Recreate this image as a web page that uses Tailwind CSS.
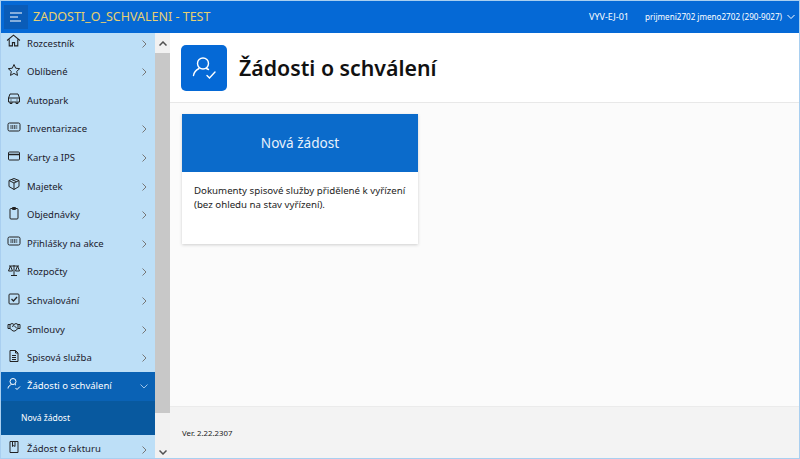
<!DOCTYPE html>
<html lang="cs">
<head>
<meta charset="utf-8">
<script src="https://cdn.jsdelivr.net/npm/@tailwindcss/browser@4"></script>
</head>
<body class="m-0 overflow-hidden">
<div class="w-[800px] h-[459px] overflow-hidden flex flex-col bg-white border border-[#a9cff0] font-['Noto_Sans',sans-serif] text-[#1a1a1a]">
  <header class="h-[32px] shrink-0 bg-[#0569d6] flex items-center">
    <div class="ml-[3px] w-[24px] h-[24px] bg-[#0a5cb8] flex items-center justify-center">
      <svg width="14" height="10" viewBox="0 0 14 10" fill="none" stroke="#fff" stroke-width="1.2"><path d="M1 1h12M1 5h8M1 9h11"/></svg>
    </div>
    <div class="ml-[5px] text-[12.5px] text-[#e8d070] whitespace-nowrap">ZADOSTI_O_SCHVALENI - TEST</div>
    <div class="ml-auto text-[9px] text-white whitespace-nowrap">VYV-EJ-01</div>
    <div class="ml-[16px] text-[8.1px] text-white whitespace-nowrap">prijmeni2702 jmeno2702 (290-9027)</div>
    <svg class="ml-[5px] mr-[4px]" width="8" height="6" viewBox="0 0 8 6" fill="none" stroke="#fff" stroke-width="1"><path d="M.5 1l3.500 3.500L7.500 1"/></svg>
  </header>
  <div class="flex flex-1 min-h-0">
    <nav class="w-[154px] shrink-0 bg-[#bddff7] flex flex-col overflow-hidden text-[9.5px] text-[#20202c]">
      <div class="h-[26px] pb-[2px] shrink-0 flex items-center -mt-[1px]">
        <svg class="ml-[5px] w-[15px] h-[15px] -mt-[8px]" viewBox="0 0 14 14" fill="none" stroke="#222" stroke-width="1"><path d="M1 7l6-5 6 5M3 6v6h3V9h2v3h3V6"/></svg>
        <span class="ml-[6px]">Rozcestník</span>
        <svg class="ml-auto mr-[8px]" width="5" height="8" viewBox="0 0 5 8" fill="none" stroke="#777" stroke-width="1"><path d="M.5.5L4 4 .5 7.500"/></svg>
      </div>
      <div class="h-[28.6px] shrink-0 flex items-center">
        <svg class="ml-[6px] w-[14px] h-[14px] -mt-[5px]" viewBox="0 0 14 14" fill="none" stroke="#222" stroke-width="1"><path d="M7 1.500l1.700 3.700 4 .5-3 2.700.8 4L7 10.400l-3.500 2 .8-4-3-2.700 4-.5z"/></svg>
        <span class="ml-[6px]">Oblíbené</span>
        <svg class="ml-auto mr-[8px]" width="5" height="8" viewBox="0 0 5 8" fill="none" stroke="#777" stroke-width="1"><path d="M.5.5L4 4 .5 7.500"/></svg>
      </div>
      <div class="h-[28.6px] shrink-0 flex items-center">
        <svg class="ml-[6px] w-[14px] h-[14px] -mt-[5px]" viewBox="0 0 14 14" fill="none" stroke="#222" stroke-width="1"><path d="M1.500 7l1.500-4h8l1.500 4v4h-11zM1.500 7h11M3 11v1.500h2V11M9 11v1.500h2V11M3.500 9h1M9.500 9h1"/></svg>
        <span class="ml-[6px]">Autopark</span>
      </div>
      <div class="h-[28.6px] shrink-0 flex items-center">
        <svg class="ml-[6px] w-[14px] h-[14px] -mt-[5px]" viewBox="0 0 14 14" fill="none" stroke="#222" stroke-width="1"><rect x="1" y="3" width="12" height="8" rx="1.500"/><path d="M3.500 6h7M3.500 8h7" stroke-width="1.400" stroke-dasharray="1 .7"/></svg>
        <span class="ml-[6px]">Inventarizace</span>
        <svg class="ml-auto mr-[8px]" width="5" height="8" viewBox="0 0 5 8" fill="none" stroke="#777" stroke-width="1"><path d="M.5.5L4 4 .5 7.500"/></svg>
      </div>
      <div class="h-[28.6px] shrink-0 flex items-center">
        <svg class="ml-[6px] w-[14px] h-[14px] -mt-[5px]" viewBox="0 0 14 14" fill="none" stroke="#222" stroke-width="1"><rect x="1.500" y="3" width="11" height="8" rx="1"/><path d="M1.500 5.500h11" stroke-width="1.500"/></svg>
        <span class="ml-[6px]">Karty a IPS</span>
        <svg class="ml-auto mr-[8px]" width="5" height="8" viewBox="0 0 5 8" fill="none" stroke="#777" stroke-width="1"><path d="M.5.5L4 4 .5 7.500"/></svg>
      </div>
      <div class="h-[28.6px] shrink-0 flex items-center">
        <svg class="ml-[6px] w-[14px] h-[14px] -mt-[5px]" viewBox="0 0 14 14" fill="none" stroke="#222" stroke-width="1"><path d="M7 1.500l5 2v6l-5 3-5-3v-6zM2 3.500l5 2.500 5-2.500M7 6v6.500M4.500 2.500l5 2.200"/></svg>
        <span class="ml-[6px]">Majetek</span>
        <svg class="ml-auto mr-[8px]" width="5" height="8" viewBox="0 0 5 8" fill="none" stroke="#777" stroke-width="1"><path d="M.5.5L4 4 .5 7.500"/></svg>
      </div>
      <div class="h-[28.6px] shrink-0 flex items-center">
        <svg class="ml-[6px] w-[14px] h-[14px] -mt-[5px]" viewBox="0 0 14 14" fill="none" stroke="#222" stroke-width="1"><rect x="3" y="2.500" width="8" height="10.500" rx="1"/><path d="M5.500 1.500h3v2h-3z"/></svg>
        <span class="ml-[6px]">Objednávky</span>
        <svg class="ml-auto mr-[8px]" width="5" height="8" viewBox="0 0 5 8" fill="none" stroke="#777" stroke-width="1"><path d="M.5.5L4 4 .5 7.500"/></svg>
      </div>
      <div class="h-[28.6px] shrink-0 flex items-center">
        <svg class="ml-[6px] w-[14px] h-[14px] -mt-[5px]" viewBox="0 0 14 14" fill="none" stroke="#222" stroke-width="1"><rect x="1" y="3" width="12" height="8" rx="1.500"/><path d="M3.500 6h7M3.500 8h7" stroke-width="1.400" stroke-dasharray="1 .7"/></svg>
        <span class="ml-[6px]">Přihlášky na akce</span>
        <svg class="ml-auto mr-[8px]" width="5" height="8" viewBox="0 0 5 8" fill="none" stroke="#777" stroke-width="1"><path d="M.5.5L4 4 .5 7.500"/></svg>
      </div>
      <div class="h-[28.6px] shrink-0 flex items-center">
        <svg class="ml-[6px] w-[14px] h-[14px] -mt-[5px]" viewBox="0 0 14 14" fill="none" stroke="#222" stroke-width="1"><path d="M7 2v10M4 12.500h6M2 3h10M3.500 3L1.500 8h4zM10.500 3l-2 5h4z"/></svg>
        <span class="ml-[6px]">Rozpočty</span>
        <svg class="ml-auto mr-[8px]" width="5" height="8" viewBox="0 0 5 8" fill="none" stroke="#777" stroke-width="1"><path d="M.5.5L4 4 .5 7.500"/></svg>
      </div>
      <div class="h-[28.6px] shrink-0 flex items-center">
        <svg class="ml-[6px] w-[14px] h-[14px] -mt-[5px]" viewBox="0 0 14 14" fill="none" stroke="#222" stroke-width="1"><rect x="2" y="2" width="10" height="10" rx="1"/><path d="M4.500 7l2 2 3.500-4" stroke-width="1.300"/></svg>
        <span class="ml-[6px]">Schvalování</span>
        <svg class="ml-auto mr-[8px]" width="5" height="8" viewBox="0 0 5 8" fill="none" stroke="#777" stroke-width="1"><path d="M.5.5L4 4 .5 7.500"/></svg>
      </div>
      <div class="h-[28.6px] shrink-0 flex items-center">
        <svg class="ml-[6px] w-[14px] h-[14px] -mt-[5px]" viewBox="0 0 14 14" fill="none" stroke="#222" stroke-width="1"><path d="M1 4.500h2l2-1 2 1 2-1 2 1h2M3 4.500v4l3 2.500h2l3-2.500v-4M5 6.500l2-1 3 3M1 4.500v4h2M13 4.500v4h-2"/></svg>
        <span class="ml-[6px]">Smlouvy</span>
        <svg class="ml-auto mr-[8px]" width="5" height="8" viewBox="0 0 5 8" fill="none" stroke="#777" stroke-width="1"><path d="M.5.5L4 4 .5 7.500"/></svg>
      </div>
      <div class="h-[28.6px] shrink-0 flex items-center">
        <svg class="ml-[6px] w-[14px] h-[14px] -mt-[5px]" viewBox="0 0 14 14" fill="none" stroke="#222" stroke-width="1"><path d="M3 1.500h5.500L11 4v8.500H3zM8.500 1.500V4H11M5 6.500h4M5 8.500h4M5 10.500h4"/></svg>
        <span class="ml-[6px]">Spisová služba</span>
        <svg class="ml-auto mr-[8px]" width="5" height="8" viewBox="0 0 5 8" fill="none" stroke="#777" stroke-width="1"><path d="M.5.5L4 4 .5 7.500"/></svg>
      </div>
      <div class="h-[29px] -mt-[1px] shrink-0 flex items-center bg-[#0a62b5] text-white">
        <svg class="ml-[6px] w-[14px] h-[14px] -mt-[5px]" viewBox="0 0 14 14" fill="none" stroke="#fff" stroke-width="1"><circle cx="6" cy="4.500" r="3"/><path d="M1 11.500c0-2 2-3.500 3.500-4M8 7.500l1 .5M8.500 11l1.500 1.500 3-3"/></svg>
        <span class="ml-[6px]">Žádosti o schválení</span>
        <svg class="ml-auto mr-[7px]" width="8" height="5" viewBox="0 0 8 5" fill="none" stroke="#9cc3e8" stroke-width="1"><path d="M.5.5L4 4 7.500.5"/></svg>
      </div>
      <div class="h-[34px] shrink-0 flex items-center bg-[#08599f] text-white text-[8.5px] pl-[20px] pt-[1px]">Nová žádost</div>
      <div class="h-[30px] shrink-0 flex items-center">
        <svg class="ml-[6px] w-[14px] h-[14px] -mt-[5px]" viewBox="0 0 14 14" fill="none" stroke="#222" stroke-width="1"><path d="M3 1.500h8v11H3zM5.500 1.500v5l1.300-1 1.200 1v-5"/></svg>
        <span class="ml-[6px]">Žádost o fakturu</span>
        <svg class="ml-auto mr-[8px]" width="5" height="8" viewBox="0 0 5 8" fill="none" stroke="#777" stroke-width="1"><path d="M.5.5L4 4 .5 7.500"/></svg>
      </div>
    </nav>
    <div class="w-[15px] shrink-0 flex flex-col bg-[#f1f1f1]">
      <div class="h-[20px] flex items-center justify-center">
        <svg width="8" height="5" viewBox="0 0 8 5" fill="none" stroke="#505050" stroke-width="1.500"><path d="M.5 4.500L4 1l3.500 3.500"/></svg>
      </div>
      <div class="h-[360px] bg-[#c8c8c8]"></div>
      <div class="flex-1 flex items-end justify-center pb-[3px]">
        <svg width="8" height="5" viewBox="0 0 8 5" fill="none" stroke="#505050" stroke-width="1.500"><path d="M.5.5L4 4l3.500-3.500"/></svg>
      </div>
    </div>
    <main class="flex-1 min-w-0 flex flex-col bg-[#fbfbfb]">
      <div class="h-[70px] shrink-0 bg-white border-b border-[#e8e8e8] flex items-center pl-[11px]">
        <div class="w-[46px] h-[46px] rounded-[5px] bg-[#0569d6] flex items-center justify-center">
          <svg width="28" height="28" viewBox="0 0 28 28" fill="none" stroke="#fff" stroke-width="1.400" stroke-linecap="round"><circle cx="13" cy="9.500" r="5.500"/><path d="M9 14.500C6 16 4 18 3.500 21.500M16.500 14.500l2 1M17 21.500l2.500 2.500 5.500-6"/></svg>
        </div>
        <h1 class="ml-[12px] text-[21.300px] font-semibold text-[#111] leading-none">Žádosti o schválení</h1>
      </div>
      <div class="flex-1 min-h-0 pt-[11px] pl-[12px]">
        <div class="w-[236px] h-[130px] bg-white shadow-[0_1px_3px_rgba(0,0,0,0.18)]">
          <div class="h-[58px] bg-[#0b6bcb] flex items-center justify-center text-[13.600px] text-[#e8f1fb]">Nová žádost</div>
          <p class="pt-[12px] px-[12px] text-[9.700px] leading-[14px] text-[#1c1c1c]">Dokumenty spisové služby přidělené k vyřízení<br>(bez ohledu na stav vyřízení).</p>
        </div>
      </div>
      <footer class="h-[52px] shrink-0 bg-[#f3f3f3] border-t border-[#ebebeb] flex items-center pl-[12px] pt-[2px] text-[7.800px] text-[#222]">Ver. 2.22.2307</footer>
    </main>
  </div>
</div>
</body>
</html>
